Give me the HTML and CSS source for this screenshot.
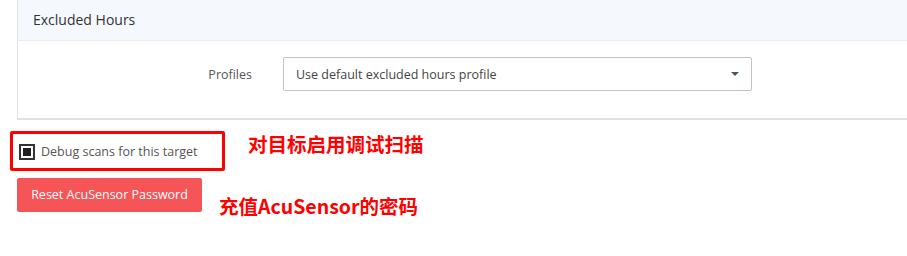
FILE: index.html
```html
<!DOCTYPE html>
<html>
<head>
<meta charset="utf-8">
<link rel="stylesheet" href="styles.css">
</head>
<body>
<div class="card">
  <div class="card-header">Excluded Hours</div>
  <div class="card-body">
    <div class="form-row">
      <label class="form-label">Profiles</label>
      <div class="select">
        <span class="select-text">Use default excluded hours profile</span>
        <span class="caret"></span>
      </div>
    </div>
  </div>
</div>
<div class="annot-row first">
  <div class="annot-box">
    <span class="checkbox"><span class="check-fill"></span></span>
    <span class="check-label">Debug scans for this target</span>
  </div>
  <span class="annot-text a1">对目标启用调试扫描</span>
</div>
<div class="annot-row second">
  <button class="btn-danger">Reset AcuSensor Password</button>
  <span class="annot-text a2">充值AcuSensor的密码</span>
</div>
</body>
</html>
```
FILE: styles.css
```css
html, body {
  margin: 0;
  padding: 0;
  background: #fff;
  overflow: hidden;
}
body {
  font-family: "Open Sans", "Noto Sans", sans-serif;
  color: #333;
  width: 907px;
  height: 256px;
}
.card {
  margin-left: 17px;
  margin-right: -20px;
  border: 1px solid #dfe4e8;
  border-top: none;
  border-bottom: 2px solid #dde2e6;
  height: 118px;
  box-sizing: content-box;
}
.card-header {
  height: 40px;
  background: #f5f9fe;
  border-bottom: 1px solid #e6ecf2;
  padding-left: 15px;
  font-size: 14px;
  line-height: 40px;
  color: #333;
}
.card-body {
  padding-top: 16px;
}
.form-row {
  display: flex;
  align-items: center;
}
.form-label {
  width: 234px;
  text-align: right;
  padding-right: 31px;
  font-size: 12.5px;
  color: #555;
}
.select {
  width: 443px;
  height: 32px;
  border: 1px solid #cbbfc3;
  border-radius: 2px;
  display: flex;
  align-items: center;
  justify-content: space-between;
  padding: 0 12px 0 12px;
  box-sizing: content-box;
}
.select-text {
  font-size: 12.5px;
  color: #444;
}
.caret {
  width: 0;
  height: 0;
  border-left: 4px solid transparent;
  border-right: 4px solid transparent;
  border-top: 4px solid #555;
}
.annot-row {
  display: flex;
  align-items: center;
}
.annot-row.first {
  margin-top: 11px;
  margin-left: 10px;
}
.annot-box {
  width: 203px;
  height: 34px;
  border: 3px solid #f00;
  border-radius: 2px;
  display: flex;
  align-items: center;
  padding-left: 6px;
  box-sizing: content-box;
}
.checkbox {
  width: 12px;
  height: 12px;
  border: 2px solid #333;
  display: flex;
  align-items: center;
  justify-content: center;
  margin-top: 2px;
}
.check-fill {
  width: 8px;
  height: 8px;
  background: #222;
}
.check-label {
  margin-left: 6px;
  font-size: 12.5px;
  color: #555;
}
.annot-text {
  color: #f00;
  font-family: "Noto Sans CJK SC", "Noto Sans", sans-serif;
  font-weight: 700;
  font-size: 19.5px;
}
.a1 {
  margin-left: 23px;
  margin-top: -15px;
}
.second {
  margin-top: -2px;
  margin-left: 17px;
}
.btn-danger {
  width: 185px;
  height: 34px;
  border: none;
  border-radius: 2px;
  background: #f55556;
  color: #fff;
  font-family: "Open Sans", "Noto Sans", sans-serif;
  font-size: 12.5px;
  padding: 0;
}
.a2 {
  margin-left: 17px;
  margin-top: 22px;
}
```
